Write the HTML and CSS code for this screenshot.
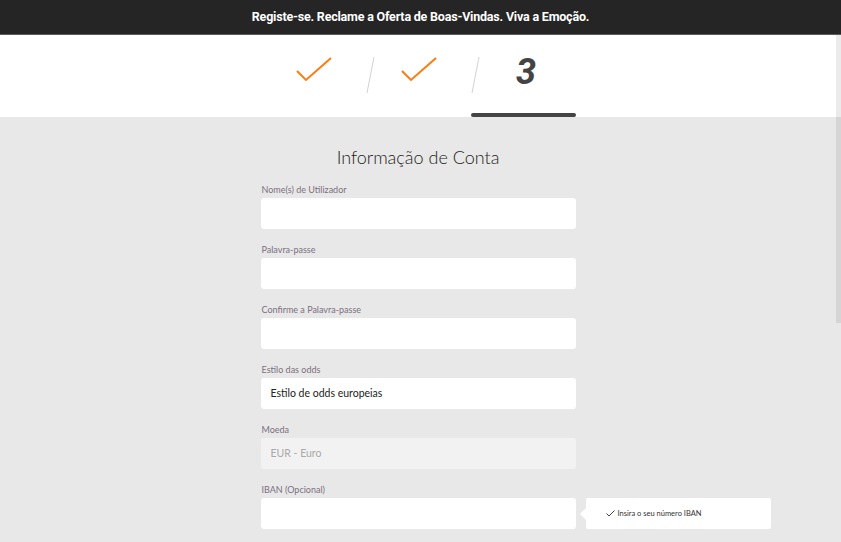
FILE: index.html
```html
<!DOCTYPE html>
<html>
<head>
    <link rel="stylesheet" href="styles.css">
</head>
<body>

    <div class="promo-bar">Registe-se. Reclame a Oferta de Boas-Vindas. Viva a Emoção.</div>

    <div class="page">
        <div class="steps-band">
            <div class="steps">
                <div class="step done">
                    <svg width="40" height="30" viewBox="0 0 40 30"><polyline points="2,14 11,23 36,1" fill="none" stroke="#ff7b0f" stroke-width="2"/></svg>
                </div>
                <div class="step done divided">
                    <svg width="40" height="30" viewBox="0 0 40 30"><polyline points="2,14 11,23 36,1" fill="none" stroke="#ff7b0f" stroke-width="2"/></svg>
                </div>
                <div class="step current divided">
                    <span class="step-num">3</span>
                </div>
            </div>
        </div>

        <div class="form-area">
            <h1 class="form-title">Informação de Conta</h1>

            <div class="field">
                <label class="field-label">Nome(s) de Utilizador</label>
                <div class="field-input"></div>
            </div>
            <div class="field">
                <label class="field-label">Palavra-passe</label>
                <div class="field-input"></div>
            </div>
            <div class="field">
                <label class="field-label">Confirme a Palavra-passe</label>
                <div class="field-input"></div>
            </div>
            <div class="field">
                <label class="field-label">Estilo das odds</label>
                <div class="field-input">Estilo de odds europeias</div>
            </div>
            <div class="field">
                <label class="field-label">Moeda</label>
                <div class="field-input disabled">EUR - Euro</div>
            </div>
            <div class="field">
                <label class="field-label">IBAN (Opcional)</label>
                <div class="field-input"></div>
                <div class="hint">
                    <svg width="9" height="7" viewBox="0 0 9 7"><polyline points="0.5,3.5 3,6 8.5,0.5" fill="none" stroke="#444" stroke-width="1"/></svg>
                    <span>Insira o seu número IBAN</span>
                </div>
            </div>
        </div>

        <div class="scroll-thumb"></div>
    </div>

</body>
</html>
```

FILE: styles.css
```css
body {
    margin: 0;
    font-family: 'Lato', 'Open Sans', sans-serif;
    background-color: #e8e8e8;
}
.promo-bar {
    height: 34px;
    line-height: 34px;
    background-color: #252525;
    border-bottom: 1px solid #5a5a5a;
    color: #fff;
    font-family: 'Roboto', sans-serif;
    font-weight: bold;
    font-size: 12.5px;
    letter-spacing: -0.2px;
    text-align: center;
}
.page {
    position: relative;
    height: 507px;
    overflow: hidden;
}
.steps-band {
    background-color: #fff;
    padding-right: 5px;
}
.steps {
    width: 315px;
    margin: 0 auto;
    display: flex;
}
.step {
    position: relative;
    flex: 1;
    height: 82px;
    display: flex;
    justify-content: center;
    align-items: center;
}
.step svg {
    margin-top: -8px;
    margin-left: 4px;
}
.step.divided::before {
    content: '';
    position: absolute;
    left: 4px;
    top: 22px;
    height: 36px;
    border-left: 1px solid #d2d2d2;
    transform: skewX(-11deg);
}
.step.current::after {
    content: '';
    position: absolute;
    left: 0;
    right: 0;
    bottom: 0;
    height: 4px;
    border-radius: 2px;
    background-color: #444;
}
.step-num {
    font-family: 'Roboto', sans-serif;
    font-weight: bold;
    font-style: italic;
    font-size: 36px;
    color: #444;
    margin-top: -8px;
    margin-left: 6px;
}
.form-area {
    width: 315px;
    margin: 0 auto;
    padding-top: 28px;
    position: relative;
    left: -2.5px;
}
.form-title {
    margin: 0 0 15px;
    font-size: 18px;
    line-height: 24px;
    font-weight: 300;
    color: #222;
    text-align: center;
}
.field {
    position: relative;
    margin-bottom: 15px;
}
.field-label {
    display: block;
    font-size: 9px;
    line-height: 12px;
    color: #7b7080;
    margin-left: 1px;
    margin-bottom: 2px;
}
.field-input {
    height: 31px;
    line-height: 31px;
    background-color: #fff;
    border-radius: 3px;
    padding: 0 10px;
    font-size: 10.5px;
    color: #222;
}
.field-input.disabled {
    background-color: #f2f2f2;
    color: #a9a9a9;
}
.hint {
    position: absolute;
    left: 325px;
    bottom: 0;
    width: 165px;
    height: 31px;
    padding-left: 20px;
    background-color: #fff;
    border-radius: 2px;
    display: flex;
    align-items: center;
    gap: 3px;
    font-size: 7.5px;
    color: #333;
}
.hint::before {
    content: '';
    position: absolute;
    left: -6px;
    top: 10px;
    border-top: 6px solid transparent;
    border-bottom: 6px solid transparent;
    border-right: 6px solid #fff;
}
.scroll-thumb {
    position: absolute;
    right: 0;
    top: 0;
    width: 5px;
    height: 288px;
    background-color: rgba(0, 0, 0, 0.08);
}
```
